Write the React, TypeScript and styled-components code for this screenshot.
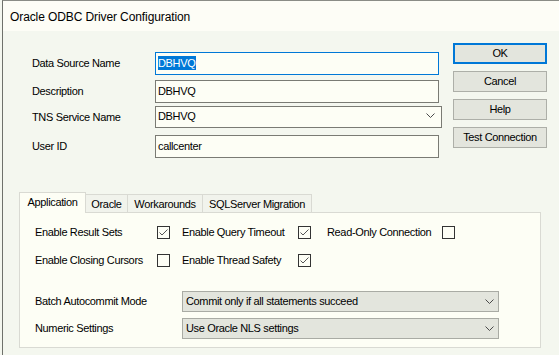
import React from "react";
import styled, { createGlobalStyle } from "styled-components";

const GlobalStyle = createGlobalStyle`
  html, body {
    margin: 0;
    padding: 0;
    background: #f4f7ef;
  }
  * {
    box-sizing: border-box;
  }
`;

const Page = styled.div`
  width: 559px;
  height: 355px;
  overflow: hidden;
  padding-left: 2px;
  background: #f4f7ef;
  font-family: "Liberation Sans", Arial, sans-serif;
  font-size: 11px;
  letter-spacing: -0.35px;
  color: #000;
`;

const Window = styled.div`
  height: 100%;
  border-top: 1px solid #8a8c86;
  border-left: 1px solid #6f716b;
  display: flex;
  flex-direction: column;
`;

const TitleBar = styled.div`
  height: 30px;
  flex-shrink: 0;
  background: #fdfdf6;
  padding-left: 7px;
  padding-top: 1px;
  display: flex;
  align-items: center;
  font-size: 12px;
  letter-spacing: -0.1px;
`;

const Body = styled.div`
  flex: 1;
  background: #f4f7ef;
`;

const TopSection = styled.div`
  display: flex;
  align-items: flex-start;
  padding-left: 29px;
`;

const FormGrid = styled.div`
  margin-top: 21px;
  display: grid;
  grid-template-columns: 123px auto;
  grid-template-rows: 28px 26px 29px 23px;
  align-items: start;
`;

const FieldLabel = styled.div<{ $h: number }>`
  height: ${(p) => p.$h}px;
  line-height: ${(p) => p.$h - 1}px;
  white-space: nowrap;
`;

const TextBox = styled.div<{ $focused?: boolean }>`
  width: 284px;
  height: 23px;
  background: #fdfef5;
  border: 1px solid ${(p) => (p.$focused ? "#0078d7" : "#7a7b74")};
  padding: 0 0 2px 2px;
  display: flex;
  align-items: center;
  white-space: nowrap;
`;

const Selected = styled.span`
  background: #0078d7;
  color: #fff;
  line-height: 14px;
  padding-right: 1px;
`;

const ComboBox = styled.div`
  width: 287px;
  height: 22px;
  background: #fdfef5;
  border: 1px solid #7a7b74;
  padding: 0 6px 3px 2px;
  display: flex;
  align-items: center;
  justify-content: space-between;
`;

const DropDown = styled.div`
  width: 317px;
  height: 21px;
  background: #e3e5dd;
  border: 1px solid #a9aba4;
  padding: 0 4px 1px 3px;
  display: flex;
  align-items: center;
  justify-content: space-between;
  white-space: nowrap;
`;

const ButtonColumn = styled.div`
  margin-left: 11px;
  margin-top: 12px;
  display: flex;
  flex-direction: column;
  gap: 7px;
`;

const Button = styled.div<{ $default?: boolean }>`
  width: 94px;
  height: 21px;
  background: #e3e5dd;
  border: ${(p) => (p.$default ? "2px solid #0078d7" : "1px solid #adafa8")};
  display: flex;
  align-items: center;
  justify-content: center;
  padding-bottom: 1px;
  white-space: nowrap;
`;

const TabsSection = styled.div`
  margin-top: 34px;
  margin-left: 16px;
  width: 522px;
`;

const TabStrip = styled.div`
  display: flex;
  align-items: flex-end;
  height: 20px;
  position: relative;
  z-index: 1;
`;

const Tab = styled.div<{ $active?: boolean; $w: number }>`
  width: ${(p) => p.$w}px;
  height: ${(p) => (p.$active ? 21 : 18)}px;
  margin-bottom: ${(p) => (p.$active ? -1 : 0)}px;
  padding: ${(p) => (p.$active ? "0 0 2px 0" : "0")};
  background: ${(p) => (p.$active ? "#fdfef5" : "#f1f3ec")};
  border-top: 1px solid #d9dad3;
  border-right: 1px solid #d9dad3;
  border-left: ${(p) => (p.$active ? "1px solid #d9dad3" : "none")};
  display: flex;
  align-items: center;
  justify-content: center;
  white-space: nowrap;
`;

const Panel = styled.div`
  height: 136px;
  background: #fdfef5;
  border: 1px solid #d9dad3;
  padding: 9px 0 0 15px;
`;

const CheckGrid = styled.div`
  display: grid;
  grid-template-columns: 122px 25px 116px 29px 115px 13px;
  grid-auto-rows: 20px;
  row-gap: 8px;
  align-items: center;
`;

const CheckLabel = styled.div`
  white-space: nowrap;
  padding-bottom: 1px;
`;

const Box = styled.div`
  width: 13px;
  height: 13px;
  border: 1px solid #333333;
  background: #fdfef5;
  display: flex;
  align-items: center;
  justify-content: center;
`;

const SelectGrid = styled.div`
  margin-top: 21px;
  display: grid;
  grid-template-columns: 147px 317px;
  grid-auto-rows: 21px;
  row-gap: 6px;
  align-items: center;
`;

const Chevron = () => (
  <svg width="9" height="5" viewBox="0 0 9 5">
    <polyline points="0.5,0.5 4.5,4.5 8.5,0.5" fill="none" stroke="#4a4a4a" strokeWidth="1" />
  </svg>
);

const CheckBox = ({ checked }: { checked?: boolean }) => (
  <Box>
    {checked && (
      <svg width="11" height="11" viewBox="0 0 11 11">
        <polyline points="1.5,5.5 4,8 9.5,2.5" fill="none" stroke="#555555" strokeWidth="1" />
      </svg>
    )}
  </Box>
);

const App = () => {
  return (
    <Page>
      <GlobalStyle />
      <Window>
        <TitleBar>Oracle ODBC Driver Configuration</TitleBar>
        <Body>
          <TopSection>
            <FormGrid>
              <FieldLabel $h={23}>Data Source Name</FieldLabel>
              <TextBox $focused>
                <Selected>DBHVQ</Selected>
              </TextBox>
              <FieldLabel $h={23}>Description</FieldLabel>
              <TextBox>DBHVQ</TextBox>
              <FieldLabel $h={24}>TNS Service Name</FieldLabel>
              <ComboBox>
                <span>DBHVQ</span>
                <Chevron />
              </ComboBox>
              <FieldLabel $h={23}>User ID</FieldLabel>
              <TextBox>callcenter</TextBox>
            </FormGrid>
            <ButtonColumn>
              <Button $default>OK</Button>
              <Button>Cancel</Button>
              <Button>Help</Button>
              <Button>Test Connection</Button>
            </ButtonColumn>
          </TopSection>

          <TabsSection>
            <TabStrip>
              <Tab $active $w={67}>Application</Tab>
              <Tab $w={42}>Oracle</Tab>
              <Tab $w={75}>Workarounds</Tab>
              <Tab $w={109}>SQLServer Migration</Tab>
            </TabStrip>
            <Panel>
              <CheckGrid>
                <CheckLabel>Enable Result Sets</CheckLabel>
                <CheckBox checked />
                <CheckLabel>Enable Query Timeout</CheckLabel>
                <CheckBox checked />
                <CheckLabel>Read-Only Connection</CheckLabel>
                <CheckBox />
                <CheckLabel>Enable Closing Cursors</CheckLabel>
                <CheckBox />
                <CheckLabel>Enable Thread Safety</CheckLabel>
                <CheckBox checked />
              </CheckGrid>
              <SelectGrid>
                <CheckLabel>Batch Autocommit Mode</CheckLabel>
                <DropDown>
                  <span>Commit only if all statements succeed</span>
                  <Chevron />
                </DropDown>
                <CheckLabel>Numeric Settings</CheckLabel>
                <DropDown>
                  <span>Use Oracle NLS settings</span>
                  <Chevron />
                </DropDown>
              </SelectGrid>
            </Panel>
          </TabsSection>
        </Body>
      </Window>
    </Page>
  );
};

export default App;
